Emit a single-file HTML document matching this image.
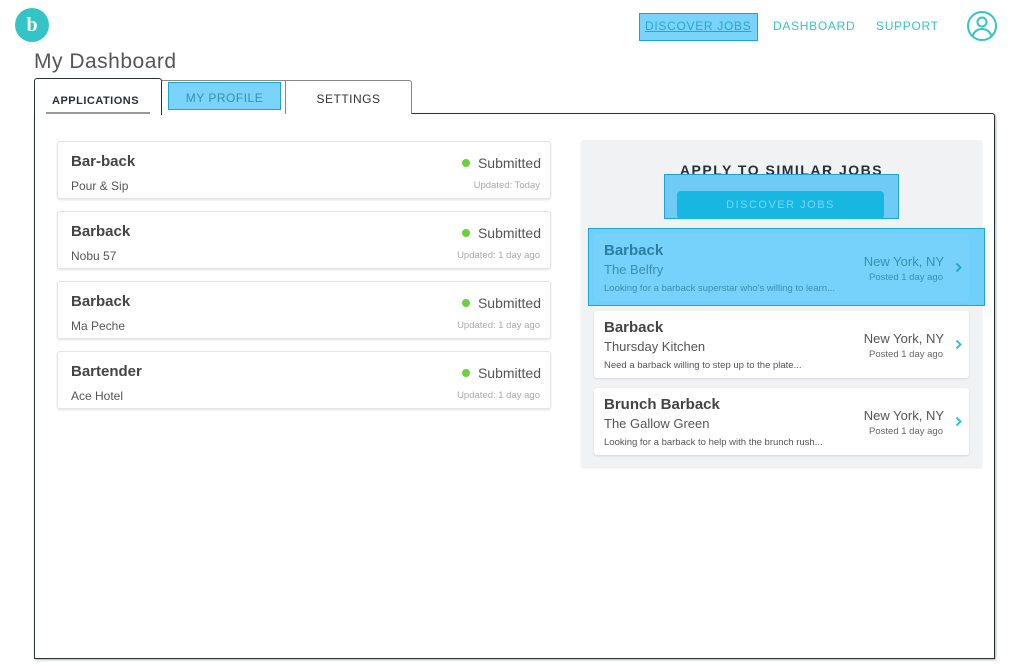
<!DOCTYPE html>
<html><head><style>
*{box-sizing:border-box;margin:0;padding:0}
body{width:1028px;height:666px;background:#fff;font-family:"Liberation Sans",sans-serif;position:relative;overflow:hidden;color:#444}
.a{position:absolute}
.nav{font-size:12px;letter-spacing:.7px;color:#33c4c8;top:19px}
.card{position:absolute;left:57px;width:494px;height:58px;background:#fff;border:1px solid #e4e4e4;border-radius:3px;box-shadow:0 1px 2px rgba(0,0,0,.12)}
.card .t{position:absolute;left:13px;top:11px;font-size:15px;font-weight:bold;color:#444}
.card .s{position:absolute;left:13px;top:37px;font-size:12px;color:#555}
.card .st{position:absolute;right:9px;top:13px;font-size:14px;color:#555}
.card .st:before{content:"";display:inline-block;width:8px;height:8px;border-radius:50%;background:#6ccf3c;margin-right:8px;vertical-align:1px}
.card .u{position:absolute;right:10px;top:38px;font-size:9.5px;color:#aaa}
.job{position:absolute;left:594px;width:375px;height:67px;background:#fff;border-radius:3px;box-shadow:0 1px 2px rgba(0,0,0,.12)}
.job .t{position:absolute;left:10px;top:8px;font-size:15px;font-weight:bold;color:#444}
.job .c{position:absolute;left:10px;top:28px;font-size:13px;color:#555}
.job .d{position:absolute;left:10px;top:49px;font-size:9.5px;color:#555}
.job .l{position:absolute;right:25px;top:20px;font-size:13px;color:#555}
.job .p{position:absolute;right:26px;top:38px;font-size:9.5px;color:#666}
.ch{position:absolute;right:7px;top:28px}
</style></head><body>
<div class="a" style="left:15px;top:8px;width:34px;height:34px;border-radius:50%;background:#33c4c8;color:#fff;font:bold 20px 'Liberation Serif',serif;text-align:center;line-height:35px">b</div>
<div class="a" style="left:639px;top:13px;width:119px;height:28px;background:#7ad3fb;border:1px solid #1aa3dd"></div>
<div class="a nav" style="left:645px;color:#2aa7c4;text-decoration:underline">DISCOVER JOBS</div>
<div class="a nav" style="left:773px">DASHBOARD</div>
<div class="a nav" style="left:876px">SUPPORT</div>
<svg class="a" style="left:966px;top:10px" width="32" height="32" viewBox="0 0 32 32" fill="none" stroke="#33c4c8" stroke-width="2"><circle cx="16" cy="16" r="14"/><circle cx="16" cy="12" r="4.5"/><path d="M6.5 26c2-5 5.5-7 9.5-7s7.5 2 9.5 7"/></svg>
<div class="a" style="left:34px;top:50px;font-size:21px;color:#555;letter-spacing:.5px">My Dashboard</div>
<div class="a" style="left:34px;top:113px;width:961px;height:546px;border:1px solid #2a2f3a;border-radius:0 3px 0 0;box-shadow:1px 1px 2px rgba(0,0,0,.3)"></div>
<div class="a" style="left:285px;top:80px;width:127px;height:34px;border:1px solid #888;border-bottom:none;border-radius:0 3px 0 0;background:#fff;font-size:12px;letter-spacing:.5px;text-align:center;line-height:36px;color:#333">SETTINGS</div>
<div class="a" style="left:161px;top:80px;width:125px;height:34px;border:1px solid #888;border-bottom:none;background:#fff"></div>
<div class="a" style="left:168px;top:82px;width:113px;height:28px;background:#7ad3fb;border:1px solid #1aa3dd;font-size:12px;letter-spacing:.5px;text-align:center;line-height:31px;color:#3a8fb0">MY PROFILE</div>
<div class="a" style="left:34px;top:78px;width:128px;height:37px;border:1px solid #2a2f3a;border-bottom:none;border-radius:3px 3px 0 0;background:#fff"></div>
<div class="a" style="left:52px;top:95px;font-size:11px;font-weight:bold;letter-spacing:.5px;color:#2a2f3a">APPLICATIONS</div>
<div class="a" style="left:46px;top:112px;width:104px;height:2px;background:#999"></div>

<div class="card" style="top:141px"><div class="t">Bar-back</div><div class="s">Pour &amp; Sip</div><div class="st">Submitted</div><div class="u">Updated: Today</div></div>
<div class="card" style="top:211px"><div class="t">Barback</div><div class="s">Nobu 57</div><div class="st">Submitted</div><div class="u">Updated: 1 day ago</div></div>
<div class="card" style="top:281px"><div class="t">Barback</div><div class="s">Ma Peche</div><div class="st">Submitted</div><div class="u">Updated: 1 day ago</div></div>
<div class="card" style="top:351px"><div class="t">Bartender</div><div class="s">Ace Hotel</div><div class="st">Submitted</div><div class="u">Updated: 1 day ago</div></div>

<div class="a" style="left:581px;top:140px;width:401px;height:327px;background:#f1f2f4;border-radius:3px;box-shadow:0 1px 2px rgba(0,0,0,.1)"></div>
<div class="a" style="left:581px;top:162px;width:401px;text-align:center;font-size:14px;font-weight:bold;letter-spacing:1.5px;color:#2a2f3a">APPLY TO SIMILAR JOBS</div>
<div class="a" style="left:664px;top:174px;width:235px;height:45px;background:#6fcbf6;border:1px solid #1aa3dd"></div>
<div class="a" style="left:677px;top:191px;width:207px;height:28px;background:#18b7e2;border-radius:4px;text-align:center;line-height:29px;font-size:11px;letter-spacing:1.5px;color:#7ad3fb">DISCOVER JOBS</div>

<div class="a" style="left:588px;top:228px;width:397px;height:78px;background:#70d0fa;border:1px solid #1aa3dd"></div>
<div class="a" style="left:594px;top:234px;width:375px;height:67px;background:#76d2fb;border-radius:3px;color:#3a8fb0">
<div class="a" style="left:10px;top:8px;font-size:15px;font-weight:bold;color:#2a7ea3">Barback</div>
<div class="a" style="left:10px;top:28px;font-size:13px">The Belfry</div>
<div class="a" style="left:10px;top:49px;font-size:9.5px;white-space:nowrap">Looking for a barback superstar who's willing to learn...</div>
<div class="a" style="right:25px;top:20px;font-size:13px">New York, NY</div>
<div class="a" style="right:26px;top:38px;font-size:9.5px">Posted 1 day ago</div>
<svg class="ch" width="7" height="11" viewBox="0 0 7 11"><path d="M1.5 1.5l4 4-4 4" fill="none" stroke="#2aa7c4" stroke-width="2"/></svg></div>
<div class="job" style="top:311px"><div class="t">Barback</div><div class="c">Thursday Kitchen</div><div class="d">Need a barback willing to step up to the plate...</div><div class="l">New York, NY</div><div class="p">Posted 1 day ago</div><svg class="ch" width="7" height="11" viewBox="0 0 7 11"><path d="M1.5 1.5l4 4-4 4" fill="none" stroke="#33c4c8" stroke-width="2"/></svg></div>
<div class="job" style="top:388px"><div class="t">Brunch Barback</div><div class="c">The Gallow Green</div><div class="d">Looking for a barback to help with the brunch rush...</div><div class="l">New York, NY</div><div class="p">Posted 1 day ago</div><svg class="ch" width="7" height="11" viewBox="0 0 7 11"><path d="M1.5 1.5l4 4-4 4" fill="none" stroke="#33c4c8" stroke-width="2"/></svg></div>
</body></html>
